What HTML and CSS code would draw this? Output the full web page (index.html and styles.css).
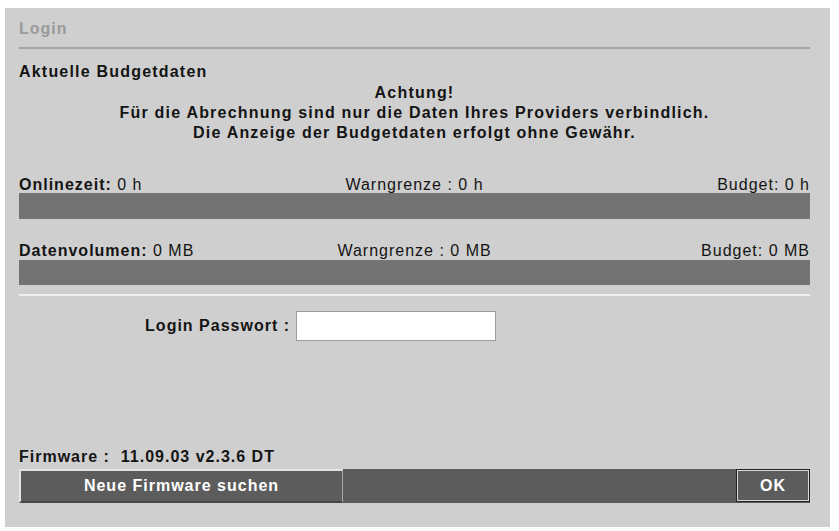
FILE: index.html
```html
<!DOCTYPE html>
<html lang="de">
<head>
<meta charset="utf-8">
<title>Login</title>
<link rel="stylesheet" href="styles.css">
</head>
<body>
<div class="panel">
  <div class="title">Login</div>
  <div class="section-title">Aktuelle Budgetdaten</div>
  <div class="notice">
    <div>Achtung!</div>
    <div>Für die Abrechnung sind nur die Daten Ihres Providers verbindlich.</div>
    <div>Die Anzeige der Budgetdaten erfolgt ohne Gewähr.</div>
  </div>
  <div class="meter first">
    <div class="meter-labels">
      <span class="ml-left"><b>Onlinezeit:</b> 0 h</span>
      <span class="ml-mid">Warngrenze : 0 h</span>
      <span class="ml-right">Budget: 0 h</span>
    </div>
    <div class="bar"></div>
  </div>
  <div class="meter second">
    <div class="meter-labels">
      <span class="ml-left"><b>Datenvolumen:</b> 0 MB</span>
      <span class="ml-mid">Warngrenze : 0 MB</span>
      <span class="ml-right">Budget: 0 MB</span>
    </div>
    <div class="bar"></div>
  </div>
  <div class="divider"></div>
  <div class="login-row">
    <label class="login-label" for="pw">Login Passwort :</label>
    <input class="login-input" id="pw" type="password">
  </div>
  <div class="spacer"></div>
  <div class="firmware">Firmware :&nbsp; 11.09.03 v2.3.6 DT</div>
  <div class="actionbar">
    <button class="btn-fw" type="button">Neue Firmware suchen</button>
    <div class="actionbar-fill"></div>
    <button class="btn-ok" type="button">OK</button>
  </div>
</div>
</body>
</html>
```
FILE: styles.css
```css
* { box-sizing: border-box; }
html, body { margin: 0; padding: 0; background: #ffffff; }
body {
  font-family: "Liberation Sans", Arial, sans-serif;
  font-size: 16px;
  color: #141414;
  letter-spacing: 1px;
}
.panel {
  margin: 8px 0 0 5px;
  width: 825px;
  height: 519px;
  background: #cfcfcf;
  padding: 0 20px 24px 14px;
  display: flex;
  flex-direction: column;
}
.title {
  padding-top: 11px;
  padding-bottom: 8px;
  line-height: 20px;
  font-weight: bold;
  color: #9a9a9a;
  border-bottom: 2px solid #a6a6a6;
}
.section-title {
  margin-top: 13px;
  line-height: 20px;
  font-weight: bold;
  letter-spacing: 1.2px;
}
.notice {
  margin-top: 1px;
  line-height: 20px;
  font-weight: bold;
  text-align: center;
  letter-spacing: 1.2px;
}
.meter.first { margin-top: 33px; }
.meter.second { margin-top: 23px; }
.meter-labels {
  display: flex;
  justify-content: space-between;
  line-height: 17px;
}
.meter.second .meter-labels { line-height: 18px; }
.ml-left, .ml-right { flex: 1; }
.ml-right { text-align: right; }
.ml-mid { flex: 0 0 auto; text-align: center; }
.meter-labels b { font-weight: bold; }
.bar {
  height: 26px;
  background: #737373;
}
.meter.second .bar { height: 25px; }
.divider {
  margin-top: 9px;
  height: 2px;
  background: #efefef;
}
.login-row {
  margin-top: 15px;
  display: flex;
  align-items: center;
  gap: 6px;
}
.login-label {
  width: 271px;
  text-align: right;
  font-weight: bold;
}
.login-input {
  width: 200px;
  height: 30px;
  border: 1px solid #9d9d9d;
  background: #ffffff;
  padding: 0 4px;
  font: inherit;
}
.spacer { flex: 1; }
.firmware {
  line-height: 18px;
  font-weight: bold;
}
.actionbar {
  margin-top: 3px;
  height: 34px;
  display: flex;
  background: #5c5c5c;
}
.btn-fw {
  width: 324px;
  height: 34px;
  margin: 0;
  background: #5c5c5c;
  border-style: solid;
  border-width: 2px 1px 2px 2px;
  border-color: #e4e4e4 #a8a8a8 #464646 #e4e4e4;
  color: #ffffff;
  font: inherit;
  font-weight: bold;
  letter-spacing: 1px;
  cursor: pointer;
}
.actionbar-fill { flex: 1; }
.btn-ok {
  width: 74px;
  height: 33px;
  margin: 0;
  background: #5c5c5c;
  border: 1px solid #222222;
  box-shadow: inset 0 0 0 1px #d8d8d8;
  color: #ffffff;
  font: inherit;
  font-weight: bold;
  letter-spacing: 1px;
  cursor: pointer;
}
```
